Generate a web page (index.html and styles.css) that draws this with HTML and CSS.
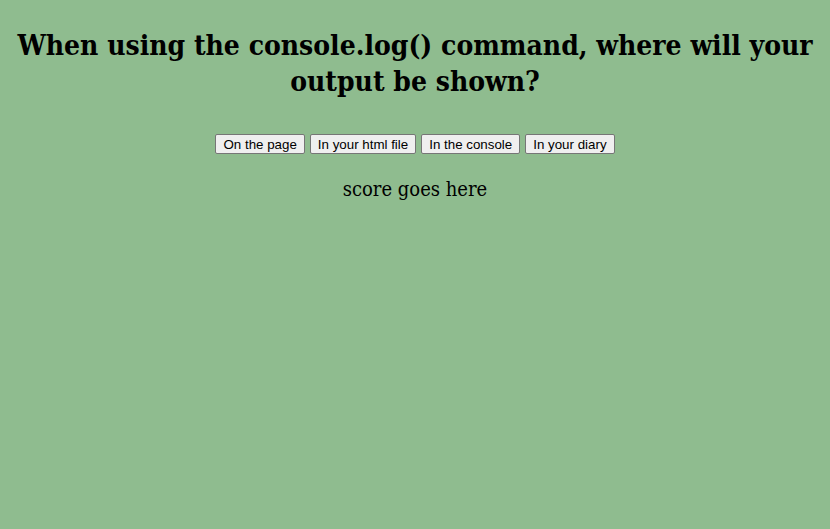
FILE: index.html
```html
<!DOCTYPE html>
<html>
<head>
<meta charset="utf-8">
<link rel="stylesheet" href="styles.css">
</head>
<body>
<main class="quiz">
  <h1 class="question">When using the console.log() command, where will your output be shown?</h1>
  <div class="answers">
    <button class="answer">On the page</button>
    <button class="answer">In your html file</button>
    <button class="answer">In the console</button>
    <button class="answer">In your diary</button>
  </div>
  <p class="score">score goes here</p>
</main>
</body>
</html>
```
FILE: styles.css
```css
html, body {
  margin: 0;
  padding: 0;
  background: #8fbc8f;
  height: 100%;
}
body {
  font-family: "Roboto Slab", "DejaVu Serif Condensed", "DejaVu Serif", serif;
  font-stretch: condensed;
  color: #000;
}
.quiz {
  padding: 28px 8px 0;
  text-align: center;
}
.question {
  font-size: 28px;
  font-weight: bold;
  line-height: 36px;
  margin: 0 0 34px;
}
.answers {
  display: flex;
  justify-content: center;
  gap: 5px;
}
.answer {
  font-family: Arial, "Liberation Sans", sans-serif;
  font-stretch: normal;
  font-size: 13.333px;
  background: #efefef;
  border: 1px solid #767676;
  border-radius: 2px;
  padding: 1px 7px;
  height: 20px;
  color: #000;
}
.score {
  font-size: 20px;
  margin: 23px 0 0;
}
```
